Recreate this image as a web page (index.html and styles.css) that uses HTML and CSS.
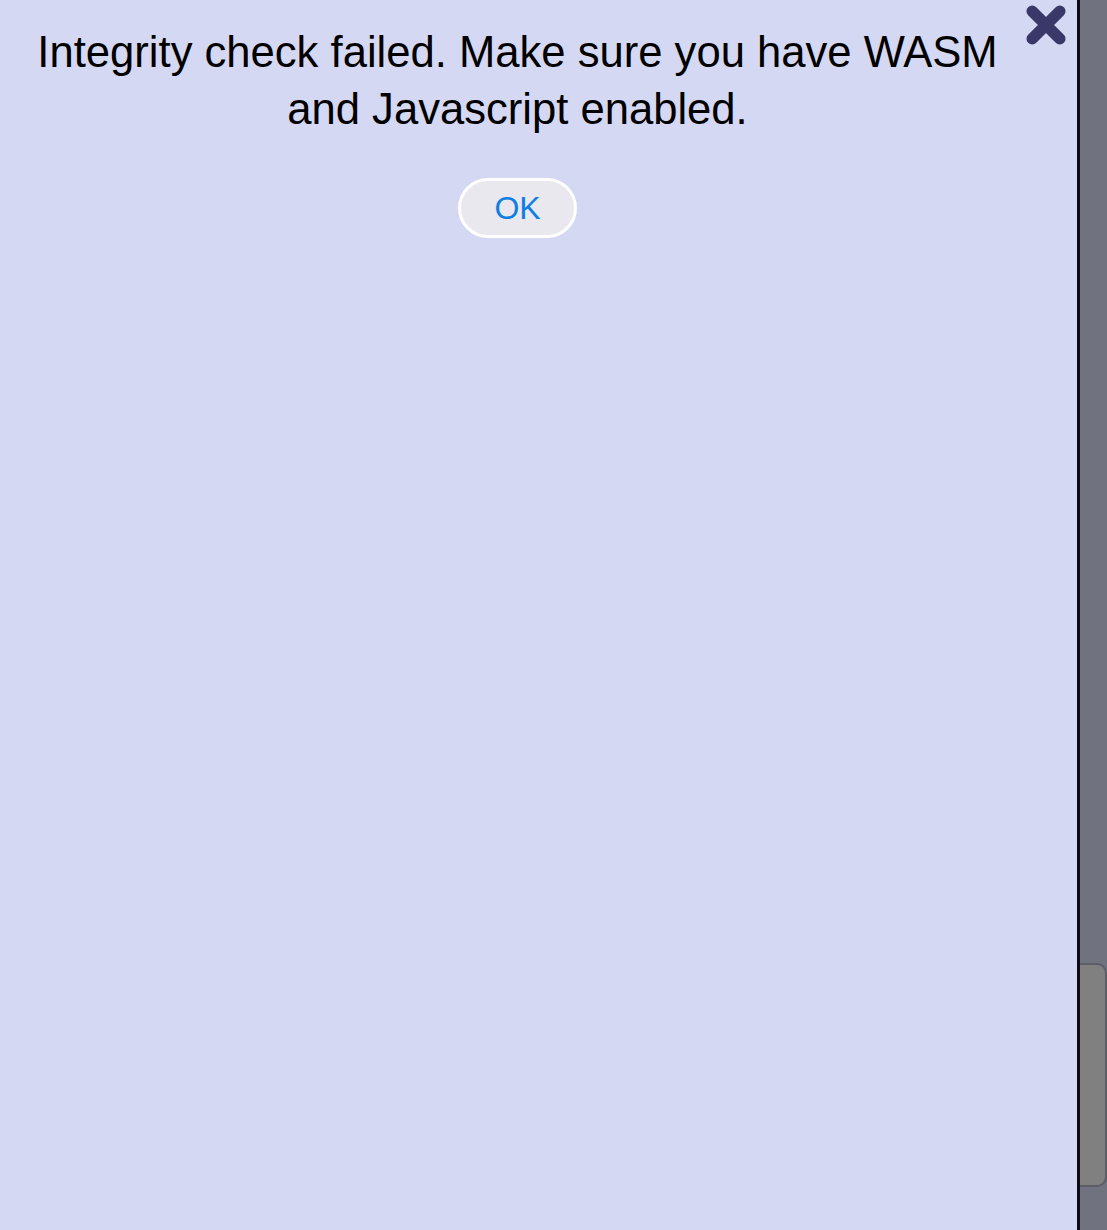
FILE: index.html
```html
<!DOCTYPE html>
<html lang="en">

<head>
    <meta charset="UTF-8">
    <meta name="viewport" content="width=device-width, initial-scale=1.0">
    <title>Integrity check</title>
    <link rel="stylesheet" href="styles.css">
</head>

<body>

    <div class="panel">
        <button class="close-btn" type="button" aria-label="Close">
            <svg viewBox="0 0 40 40" width="46" height="46">
                <path d="M8 8 L32 32 M32 8 L8 32" stroke="#3a3868" stroke-width="10" stroke-linecap="round" fill="none" />
            </svg>
        </button>

        <div class="message-box">
            <p class="message">Integrity check failed. Make sure you have WASM and Javascript enabled.</p>
            <button class="ok-btn" type="button">OK</button>
        </div>
    </div>

    <div class="rail">
        <div class="thumb"></div>
    </div>

</body>

</html>
```

FILE: styles.css
```css
body {
    font-family: "Liberation Sans", Arial, sans-serif;
    margin: 0;
    height: 100vh;
    display: flex;
    overflow: hidden;
}

.panel {
    flex: 1;
    position: relative;
    background-color: #d5d8f2;
    border-right: 3px solid #0b0b16;
}

.message-box {
    display: flex;
    flex-direction: column;
    align-items: center;
    padding: 24px 42px 0 0;
    text-align: center;
}

.message {
    margin: 0 30px;
    font-size: 43.6px;
    line-height: 57px;
    color: #000;
}

.ok-btn {
    margin-top: 40px;
    width: 119px;
    height: 60px;
    background-color: #e8e8ee;
    color: #0f7fe6;
    font-family: "Liberation Sans", Arial, sans-serif;
    font-size: 32px;
    border: 3px solid #fff;
    border-radius: 30px;
    cursor: pointer;
}

.close-btn {
    position: absolute;
    top: 2px;
    right: 8px;
    padding: 0;
    border: none;
    background: none;
    cursor: pointer;
}

.rail {
    width: 27px;
    background-color: #70737f;
}

.thumb {
    margin-top: 963px;
    height: 220px;
    background-color: #808080;
    border: 2px solid #5c5d66;
    border-left: none;
    border-radius: 0 10px 10px 0;
}
```
